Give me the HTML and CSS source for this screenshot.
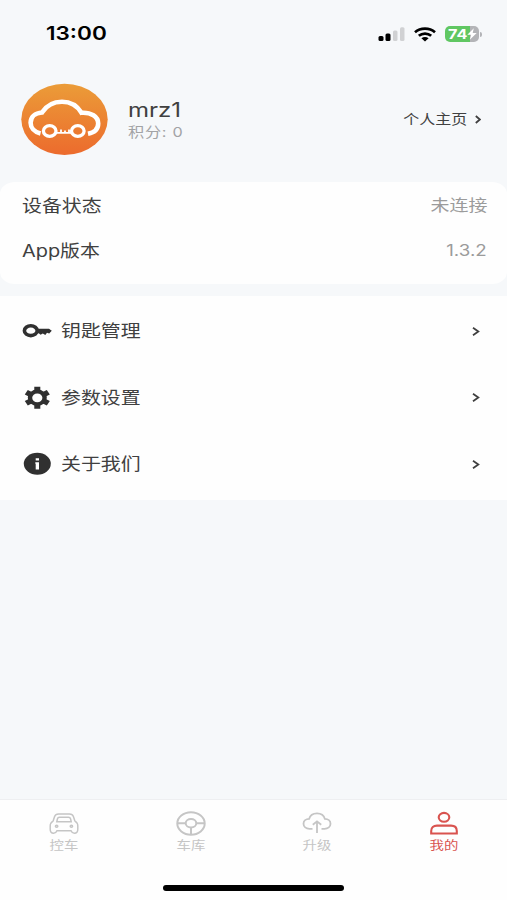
FILE: index.html
```html
<!DOCTYPE html>
<html lang="zh-CN">
<head>
    <meta charset="UTF-8">
    <meta name="viewport" content="width=device-width, initial-scale=1.0">
    <title>我的</title>
    <link rel="stylesheet" href="styles.css">
</head>
<body>
    <div class="status">
        <span class="wide time">13:00</span>
        <div class="status_icons">
            <svg width="27" height="16" viewBox="0 0 27 16">
                <rect x="0.5" y="10" width="5" height="5" rx="1.5" fill="#000"/>
                <rect x="7.5" y="7.5" width="5" height="7.5" rx="1.5" fill="#000"/>
                <rect x="15" y="4.5" width="4.5" height="10.5" rx="1.5" fill="#d0d1d3"/>
                <rect x="22" y="1.2" width="4.5" height="13.8" rx="1.5" fill="#d0d1d3"/>
            </svg>
            <svg width="22" height="15" viewBox="0 0 22 15" fill="none" stroke="#000" stroke-width="2.7">
                <path d="M1 5.2C6.5 0.4 15.5 0.4 21 5.2"/>
                <path d="M4.8 8.8C8.4 5.8 13.6 5.8 17.2 8.8"/>
                <path d="M7.4 11.3C9.5 9.6 12.5 9.6 14.6 11.3L11 14.6Z" fill="#000" stroke="none"/>
            </svg>
            <div class="battery">
                <span class="wide battery_num">74</span>
                <svg width="10" height="12" viewBox="0 0 10 12" fill="#fff"><path d="M6.8 0.3L0.3 6.8H4.2L2.8 11.7L9.7 4.9H5.7Z"/></svg>
            </div>
        </div>
    </div>

    <header class="profile">
        <svg class="avatar" width="87" height="72" viewBox="0 0 87 72">
            <defs>
                <linearGradient id="orange" x1="0" y1="0" x2="0" y2="1">
                    <stop offset="0" stop-color="#eb9c38"/>
                    <stop offset="1" stop-color="#ec6b2d"/>
                </linearGradient>
            </defs>
            <ellipse cx="43.5" cy="36.3" rx="43.2" ry="35.6" fill="url(#orange)"/>
            <g fill="none" stroke="#fff">
                <path stroke-width="4.6" d="M19.5 50.5C13 49 9.6 44.5 9.6 39.8C9.6 34 14 30 21 29.5C25.5 22.5 32 18.8 41 18.8C49.5 18.8 56 22.5 60.5 29.8C70 29.2 77.2 33.5 77.2 40.5C77.2 46 73 49.6 67 50.8"/>
                <ellipse cx="28.7" cy="48" rx="6.3" ry="5.3" stroke-width="3.3"/>
                <ellipse cx="56.8" cy="48" rx="6.3" ry="5.3" stroke-width="3.3"/>
                <path stroke-width="1.8" d="M35.5 49.8H50M40 49.5V46.6M44 49.5V47.4M48 49.5V46.6"/>
            </g>
        </svg>
        <div class="who">
            <span class="wide name">mrz1</span>
            <span class="wide points">积分: 0</span>
        </div>
        <div class="home_link">
            <span class="wide wide_end">个人主页</span>
            <svg width="6" height="9" viewBox="0 0 6 9"><path class="arrow" d="M0.8 1L4.9 4.5L0.8 8"/></svg>
        </div>
    </header>

    <section class="card">
        <div class="info">
            <span class="wide">设备状态</span>
            <span class="wide wide_end value">未连接</span>
        </div>
        <div class="info">
            <span class="wide">App版本</span>
            <span class="wide wide_end value version">1.3.2</span>
        </div>
    </section>

    <main class="menu">
        <div class="row">
            <svg class="row_icon" width="30" height="24" viewBox="0 0 30 24">
                <ellipse cx="8.8" cy="11.7" rx="6.4" ry="4.9" fill="none" stroke="#303030" stroke-width="3.6"/>
                <path d="M15.5 9.7H27L29.8 11.8L27.2 14.6L25 13.8L23.3 16L20.8 14.4L18.6 15.8L16.8 14.2H15.5Z" fill="#303030"/>
            </svg>
            <span class="wide label">钥匙管理</span>
            <svg width="8" height="9" viewBox="0 0 8 9"><path class="arrow" d="M1 0.8L6.3 4.5L1 8.2"/></svg>
        </div>
        <div class="row">
            <svg class="row_icon" width="30" height="24" viewBox="0 0 30 24">
                <g transform="translate(15.3 11.8) scale(1.16 1)" stroke="#303030" fill="none">
                    <circle r="6.3" stroke-width="3.8"/>
                    <path stroke-width="5.2" d="M0 -6.5V-11M0 6.5V11M5.6 -3.25L9.5 -5.5M5.6 3.25L9.5 5.5M-5.6 -3.25L-9.5 -5.5M-5.6 3.25L-9.5 5.5"/>
                </g>
            </svg>
            <span class="wide label">参数设置</span>
            <svg width="8" height="9" viewBox="0 0 8 9"><path class="arrow" d="M1 0.8L6.3 4.5L1 8.2"/></svg>
        </div>
        <div class="row">
            <svg class="row_icon" width="30" height="24" viewBox="0 0 30 24">
                <ellipse cx="15.3" cy="11.8" rx="13.5" ry="11" fill="#303030"/>
                <path d="M13.7 6.2H17V8.6H13.7ZM13.3 10.2H17V17.4H13.7V11.8H13.3Z" fill="#fff"/>
            </svg>
            <span class="wide label">关于我们</span>
            <svg width="8" height="9" viewBox="0 0 8 9"><path class="arrow" d="M1 0.8L6.3 4.5L1 8.2"/></svg>
        </div>
    </main>

    <footer>
        <nav class="tabs">
            <div class="tab">
                <svg width="30" height="26" viewBox="0 0 30 26">
                    <path d="M9.5 2.9H20.5Q23.5 2.9 24.4 5.5L25.8 9.8Q28.8 11.8 28.8 15V18.2Q28.8 22.2 25.4 22.2Q23 22.2 22 19.8H8Q7 22.2 4.6 22.2Q1.2 22.2 1.2 18.2V15Q1.2 11.8 4.2 9.8L5.6 5.5Q6.5 2.9 9.5 2.9Z"/>
                    <path d="M10.5 6.3H19.5Q21.2 6.3 21.6 8L22.2 10.8H7.8L8.4 8Q8.8 6.3 10.5 6.3Z"/>
                    <ellipse cx="7.6" cy="15.3" rx="1.2" ry="1"/>
                    <ellipse cx="22.4" cy="15.3" rx="1.2" ry="1"/>
                </svg>
                <span class="wide wide_mid">控车</span>
            </div>
            <div class="tab">
                <svg width="30" height="26" viewBox="0 0 30 26">
                    <g stroke-width="2">
                        <ellipse cx="15" cy="12.5" rx="13.7" ry="11.2"/>
                        <ellipse cx="15" cy="12.3" rx="5.3" ry="4.3"/>
                        <path d="M1.5 12.3H9.7M20.3 12.3H28.5M15 16.5V23.5"/>
                    </g>
                </svg>
                <span class="wide wide_mid">车库</span>
            </div>
            <div class="tab">
                <svg width="30" height="26" viewBox="0 0 30 26">
                    <path stroke-width="1.8" d="M10.5 17.8H7.5C4 17.8 1.5 15.7 1.5 12.8C1.5 9.9 4 8 7.1 7.9C8 4.7 11 2.4 15 2.4C19 2.4 22 4.7 22.9 7.9C26 8 28.5 9.9 28.5 12.8C28.5 15.7 26 17.8 22.5 17.8H19.5M15 22.1V10.5M10.8 13.8L15 10.3L19.2 13.8"/>
                </svg>
                <span class="wide wide_mid">升级</span>
            </div>
            <div class="tab active">
                <svg width="30" height="26" viewBox="0 0 30 26">
                    <g stroke-width="2.1">
                        <ellipse cx="15" cy="6.3" rx="5.3" ry="4.4"/>
                        <path d="M2.2 22.5V20C2.2 16.5 4.4 14.6 8 14.6H22C25.6 14.6 27.8 16.5 27.8 20V22.5Z"/>
                    </g>
                </svg>
                <span class="wide wide_mid">我的</span>
            </div>
        </nav>
        <div class="home_bar"></div>
    </footer>
</body>
</html>
```

FILE: styles.css
```css
* {
    box-sizing: border-box;
}
body {
    margin: 0;
    height: 900px;
    display: flex;
    flex-direction: column;
    overflow: hidden;
    background-color: #f6f8fa;
    color: #404040;
    font-family: Inter, "Noto Sans CJK SC", sans-serif;
    font-size: 16.6px;
    line-height: 20px;
}
svg {
    display: block;
    flex: none;
}
/* text is drawn wider than its natural shape */
.wide {
    display: inline-block;
    white-space: nowrap;
    transform: scaleX(1.2);
    transform-origin: left center;
}
.wide_end {
    transform-origin: right center;
}
.wide_mid {
    transform-origin: center;
}
.arrow {
    fill: none;
    stroke: #404040;
    stroke-width: 1.8;
}
.status {
    height: 68px;
    padding: 0 25px 0 46px;
    display: flex;
    align-items: center;
    justify-content: space-between;
}
.time {
    color: #000;
    font-size: 18.8px;
    font-weight: 600;
}
.status_icons {
    display: flex;
    align-items: center;
    gap: 9px;
}
.battery {
    position: relative;
    width: 34px;
    height: 16px;
    margin-right: 3px;
    padding-left: 3px;
    display: flex;
    align-items: center;
    border-radius: 5px;
    background: linear-gradient(to right, #60c762 74%, #b3b4b7 74%);
}
.battery::after {
    content: "";
    position: absolute;
    right: -3px;
    top: 6px;
    width: 2px;
    height: 5px;
    border-radius: 0 2px 2px 0;
    background-color: #b3b4b7;
}
.battery_num {
    width: 19px;
    color: #fff;
    font-size: 13.5px;
    font-weight: 700;
    line-height: 16px;
}
.profile {
    height: 114px;
    padding: 15px 26px 0 21px;
    display: flex;
    align-items: flex-start;
}
.who {
    margin: 16px 0 0 20px;
    flex: 1;
    display: flex;
    flex-direction: column;
    align-items: flex-start;
}
.name {
    font-size: 20px;
    line-height: 23px;
}
.points {
    color: #a2a3a5;
    font-size: 13.5px;
    line-height: 20px;
    letter-spacing: 0.6px;
}
.home_link {
    margin-top: 26px;
    display: flex;
    align-items: center;
    gap: 8px;
    font-size: 13.3px;
}
.card {
    height: 102px;
    padding: 1px 20px 0 22px;
    border-radius: 15px / 12px;
    background-color: #fefefe;
}
.info {
    height: 45px;
    display: flex;
    align-items: center;
    justify-content: space-between;
}
.value {
    color: #9b9b9b;
    font-size: 15.8px;
}
.version {
    font-size: 15.6px;
}
.menu {
    height: 204px;
    margin-top: 12px;
    padding: 2px 27px 0 22px;
    background-color: #fefefe;
}
.row {
    height: 66.5px;
    display: flex;
    align-items: center;
}
.label {
    margin-left: 9px;
    margin-right: auto;
}
footer {
    height: 101px;
    margin-top: auto;
    border-top: 1px solid #eeeff1;
    background-color: #fefefe;
}
.tabs {
    height: 85px;
    padding-left: 1px;
    display: grid;
    grid-template-columns: repeat(4, 1fr);
}
.tab {
    padding-top: 11px;
    display: flex;
    flex-direction: column;
    align-items: center;
    color: #c5c5c5;
    font-size: 12px;
    line-height: 18px;
}
.tab svg {
    fill: none;
    stroke: currentColor;
    stroke-width: 1.5;
}
.tab.active {
    color: #d9534f;
}
.home_bar {
    width: 181px;
    height: 6px;
    margin: 0 auto;
    border-radius: 3px;
    background-color: #000;
}
```
